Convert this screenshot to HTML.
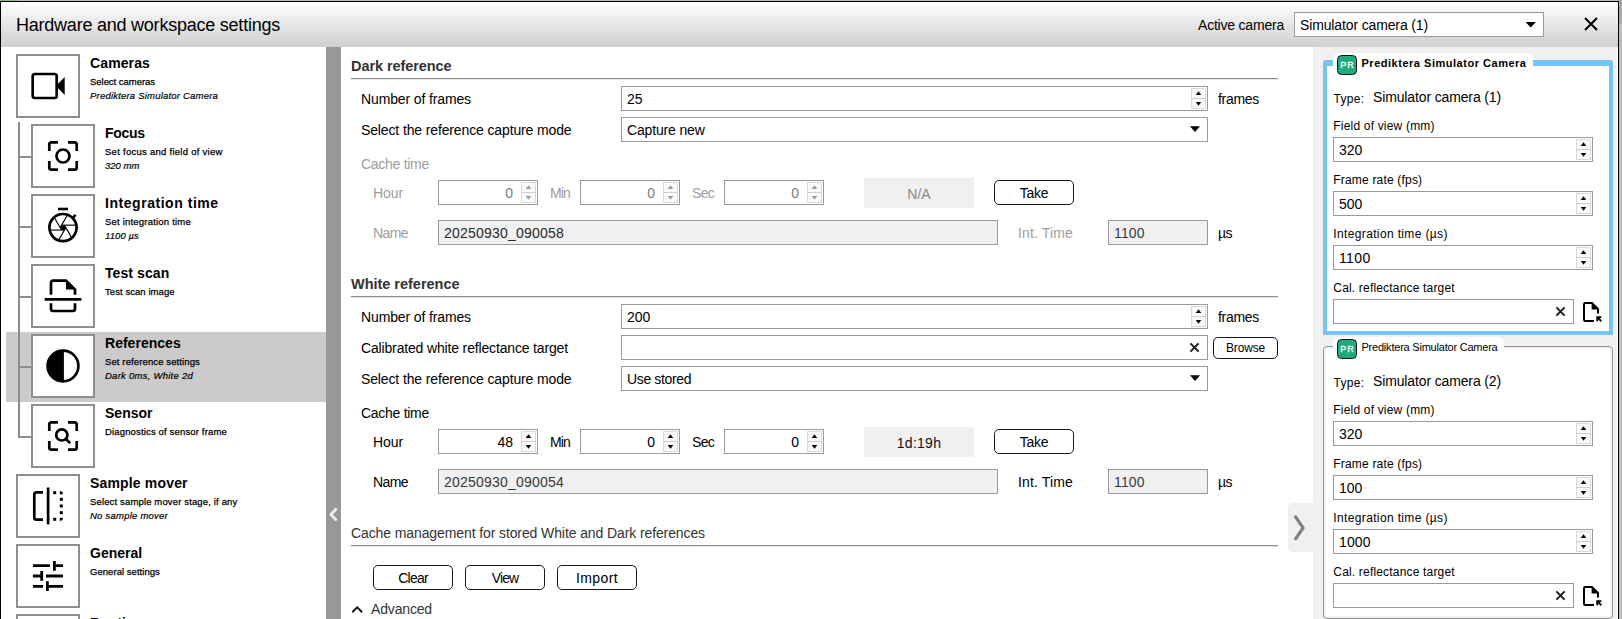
<!DOCTYPE html>
<html><head><meta charset="utf-8"><title>Hardware and workspace settings</title>
<style>
html,body{margin:0;padding:0}
body{width:1622px;height:619px;overflow:hidden;background:#fff;position:relative;font-family:"Liberation Sans",sans-serif}
.a{position:absolute;display:block}
.t{position:absolute;white-space:nowrap;display:block}
.bx{width:64px;height:64px;box-sizing:border-box;border:2px solid #8f8f8f;background:#fff}
.bx svg{display:block}
</style></head>
<body>
<div class="a" style="left:0px;top:0px;width:1622px;height:1px;background:#bdbdbd"></div>
<div class="a" style="left:0px;top:0px;width:18px;height:1px;background:#8fbc8f"></div>
<div class="a" style="left:0px;top:1px;width:1619px;height:1px;background:#000"></div>
<div class="a" style="left:0px;top:1px;width:1px;height:618px;background:#000"></div>
<div class="a" style="left:1618px;top:1px;width:1px;height:618px;background:#000"></div>
<div class="a" style="left:1619px;top:0px;width:3px;height:619px;background:#bcbcbc"></div>
<div class="a" style="left:1619px;top:0px;width:3px;height:24px;background:#a9a9a9"></div>
<div class="a" style="left:1px;top:2px;width:1617px;height:45px;background:linear-gradient(#ffffff,#f3f3f3 25%,#e2e2e2 60%,#cfcfcf 100%)"></div>
<span class="t" id="t1" style="left:16px;top:15px;font-size:18px;line-height:20px;color:#000;letter-spacing:-0.230px;">Hardware and workspace settings</span>
<span class="t" id="t2" style="left:1198px;top:17px;font-size:14px;line-height:16px;color:#000;letter-spacing:-0.208px;">Active camera</span>
<div class="a" style="left:1294px;top:12px;width:250px;height:25px;background:#fff;border:1px solid #9a9a9a;box-sizing:border-box"></div>
<span class="t" id="t3" style="left:1300px;top:17px;font-size:14px;line-height:16px;color:#000;letter-spacing:-0.135px;">Simulator camera (1)</span>
<svg class="a" style="left:1524px;top:20px" width="14" height="9"><path d="M1.5 2 L12 2 L6.75 7.6 Z" fill="#000"/></svg>
<svg class="a" style="left:1582px;top:15px" width="18" height="18"><path d="M3 3 L15 15 M15 3 L3 15" stroke="#000" stroke-width="2" fill="none"/></svg>
<div class="a" style="left:1px;top:47px;width:325px;height:572px;background:#fff"></div>
<div class="a" style="left:6px;top:332px;width:320px;height:70px;background:#cccaca"></div>
<div class="a" style="left:18px;top:122px;width:2px;height:316px;background:#8c8c8c"></div>
<div class="a" style="left:20px;top:156px;width:11px;height:2px;background:#8c8c8c"></div>
<div class="a" style="left:20px;top:226px;width:11px;height:2px;background:#8c8c8c"></div>
<div class="a" style="left:20px;top:296px;width:11px;height:2px;background:#8c8c8c"></div>
<div class="a" style="left:20px;top:366px;width:11px;height:2px;background:#8c8c8c"></div>
<div class="a" style="left:20px;top:436px;width:11px;height:2px;background:#8c8c8c"></div>
<div class="a bx" style="left:16px;top:54px"><svg width="60" height="60" viewBox="2 2 60 60"><rect x="16.7" y="20" width="24" height="24" rx="2.2" stroke="#000" stroke-width="2.7" fill="none"/><path d="M41.6 30.2 L48.7 23 L48.7 41 L41.6 33.8 Z" fill="#000"/></svg></div>
<span class="t" id="t4" style="left:90px;top:54.6px;font-size:14px;line-height:16px;color:#000;font-weight:bold;letter-spacing:0.121px;">Cameras</span>
<span class="t" id="t5" style="left:90px;top:76px;font-size:9.5px;line-height:11px;color:#000;letter-spacing:-0.035px;-webkit-text-stroke:0.25px #000;">Select cameras</span>
<span class="t" id="t6" style="left:90px;top:90px;font-size:9.5px;line-height:11px;color:#000;font-style:italic;letter-spacing:0.204px;-webkit-text-stroke:0.2px #000;">Prediktera Simulator Camera</span>
<div class="a bx" style="left:31px;top:124px"><svg width="60" height="60" viewBox="2 2 60 60"><path d="M18.3 27 V20.5 Q18.3 18.3 20.5 18.3 H27 M37 18.3 H43.5 Q45.7 18.3 45.7 20.5 V27 M45.7 37 V43.5 Q45.7 45.7 43.5 45.7 H37 M27 45.7 H20.5 Q18.3 45.7 18.3 43.5 V37" stroke="#000" stroke-width="2.7" fill="none"/><circle cx="32" cy="32" r="6.5" stroke="#000" stroke-width="2.7" fill="none"/></svg></div>
<span class="t" id="t7" style="left:105px;top:124.6px;font-size:14px;line-height:16px;color:#000;font-weight:bold;letter-spacing:-0.287px;">Focus</span>
<span class="t" id="t8" style="left:105px;top:146px;font-size:9.5px;line-height:11px;color:#000;letter-spacing:0.268px;-webkit-text-stroke:0.25px #000;">Set focus and field of view</span>
<span class="t" id="t9" style="left:105px;top:160px;font-size:9.5px;line-height:11px;color:#000;font-style:italic;letter-spacing:0.012px;-webkit-text-stroke:0.2px #000;">320 mm</span>
<div class="a bx" style="left:31px;top:194px"><svg width="60" height="60" viewBox="2 2 60 60"><path d="M27 15 H37" stroke="#000" stroke-width="2.6" fill="none"/><circle cx="32" cy="33.6" r="13.6" stroke="#000" stroke-width="2.7" fill="none"/><path d="M41.6 24 L44.6 20.8" stroke="#000" stroke-width="2.6" fill="none"/><path d="M30.59 31.15 L33.41 31.15 L34.83 33.60 L33.41 36.05 L30.59 36.05 L29.17 33.60 Z" fill="#000"/><path d="M30.59 31.15 L44.56 31.15" stroke="#000" stroke-width="1.15" fill="none"/><path d="M33.41 31.15 L40.40 43.26" stroke="#000" stroke-width="1.15" fill="none"/><path d="M34.83 33.60 L27.84 45.71" stroke="#000" stroke-width="1.15" fill="none"/><path d="M33.41 36.05 L19.44 36.05" stroke="#000" stroke-width="1.15" fill="none"/><path d="M30.59 36.05 L23.60 23.94" stroke="#000" stroke-width="1.15" fill="none"/><path d="M29.17 33.60 L36.16 21.49" stroke="#000" stroke-width="1.15" fill="none"/></svg></div>
<span class="t" id="t10" style="left:105px;top:194.6px;font-size:14px;line-height:16px;color:#000;font-weight:bold;letter-spacing:0.543px;">Integration time</span>
<span class="t" id="t11" style="left:105px;top:216px;font-size:9.5px;line-height:11px;color:#000;letter-spacing:0.202px;-webkit-text-stroke:0.25px #000;">Set integration time</span>
<span class="t" id="t12" style="left:105px;top:230px;font-size:9.5px;line-height:11px;color:#000;font-style:italic;letter-spacing:0.086px;-webkit-text-stroke:0.2px #000;">1100 µs</span>
<div class="a bx" style="left:31px;top:264px"><svg width="60" height="60" viewBox="2 2 60 60"><path d="M20 30.8 V18.8 Q20 16.6 22.2 16.6 H35 L44 25.6 V30.8" stroke="#000" stroke-width="2.7" fill="none"/><path d="M35 16.6 V25.6 H44 Z" fill="#000"/><path d="M13.7 35.3 H50.4" stroke="#000" stroke-width="2.7" fill="none"/><path d="M20 39.3 V44.8 Q20 47 22.2 47 H41.8 Q44 47 44 44.8 V39.3" stroke="#000" stroke-width="2.7" fill="none"/></svg></div>
<span class="t" id="t13" style="left:105px;top:264.6px;font-size:14px;line-height:16px;color:#000;font-weight:bold;letter-spacing:0.095px;">Test scan</span>
<span class="t" id="t14" style="left:105px;top:286px;font-size:9.5px;line-height:11px;color:#000;letter-spacing:0.063px;-webkit-text-stroke:0.25px #000;">Test scan image</span>
<div class="a bx" style="left:31px;top:334px"><svg width="60" height="60" viewBox="2 2 60 60"><circle cx="32" cy="32" r="15.4" stroke="#000" stroke-width="2.7" fill="none"/><path d="M32.9 16.6 A15.4 15.4 0 0 0 32.9 47.4 Z" fill="#000"/><path d="M32 16.6 A15.4 15.4 0 0 0 32 47.4 Z" fill="#000"/></svg></div>
<span class="t" id="t15" style="left:105px;top:334.6px;font-size:14px;line-height:16px;color:#000;font-weight:bold;letter-spacing:0.020px;">References</span>
<span class="t" id="t16" style="left:105px;top:356px;font-size:9.5px;line-height:11px;color:#000;letter-spacing:0.117px;-webkit-text-stroke:0.25px #000;">Set reference settings</span>
<span class="t" id="t17" style="left:105px;top:370px;font-size:9.5px;line-height:11px;color:#000;font-style:italic;letter-spacing:0.254px;-webkit-text-stroke:0.2px #000;">Dark 0ms, White 2d</span>
<div class="a bx" style="left:31px;top:404px"><svg width="60" height="60" viewBox="2 2 60 60"><path d="M18.3 27 V20.5 Q18.3 18.3 20.5 18.3 H27 M37 18.3 H43.5 Q45.7 18.3 45.7 20.5 V27 M45.7 37 V43.5 Q45.7 45.7 43.5 45.7 H37 M27 45.7 H20.5 Q18.3 45.7 18.3 43.5 V37" stroke="#000" stroke-width="2.7" fill="none"/><circle cx="30.8" cy="30.9" r="5.6" stroke="#000" stroke-width="2.7" fill="none"/><path d="M34.9 35 L39.2 39.3" stroke="#000" stroke-width="2.7" fill="none"/></svg></div>
<span class="t" id="t18" style="left:105px;top:404.6px;font-size:14px;line-height:16px;color:#000;font-weight:bold;letter-spacing:0.005px;">Sensor</span>
<span class="t" id="t19" style="left:105px;top:426px;font-size:9.5px;line-height:11px;color:#000;letter-spacing:0.154px;-webkit-text-stroke:0.25px #000;">Diagnostics of sensor frame</span>
<div class="a bx" style="left:16px;top:474px"><svg width="60" height="60" viewBox="2 2 60 60"><path d="M27 18.3 H20.5 Q18.3 18.3 18.3 20.5 V43.5 Q18.3 45.7 20.5 45.7 H27" stroke="#000" stroke-width="2.7" fill="none"/><path d="M32.1 13.5 V50.4" stroke="#000" stroke-width="2.7" fill="none"/><rect x="43.8" y="23.8" width="3" height="3" fill="#000"/><rect x="43.8" y="30.5" width="3" height="3" fill="#000"/><rect x="43.8" y="37.2" width="3" height="3" fill="#000"/><path d="M43.8 17.2 H44.6 Q46.8 17.2 46.8 19.4 V20.2 H43.8 Z M43.8 43.8 H46.8 V44.6 Q46.8 46.8 44.6 46.8 H43.8 Z" fill="#000"/><rect x="37.2" y="17.2" width="3" height="3" fill="#000"/><rect x="37.2" y="43.8" width="3" height="3" fill="#000"/></svg></div>
<span class="t" id="t20" style="left:90px;top:474.6px;font-size:14px;line-height:16px;color:#000;font-weight:bold;letter-spacing:0.165px;">Sample mover</span>
<span class="t" id="t21" style="left:90px;top:496px;font-size:9.5px;line-height:11px;color:#000;letter-spacing:0.146px;-webkit-text-stroke:0.25px #000;">Select sample mover stage, if any</span>
<span class="t" id="t22" style="left:90px;top:510px;font-size:9.5px;line-height:11px;color:#000;font-style:italic;letter-spacing:0.236px;-webkit-text-stroke:0.2px #000;">No sample mover</span>
<div class="a bx" style="left:16px;top:544px"><svg width="60" height="60" viewBox="2 2 60 60"><path d="M16.9 21.7 H33.9 M38.4 16.9 V26.7 M38.4 21.7 H47 M16.9 32 H25.7 M25.7 27.1 V36.7 M30 32 H47 M16.9 42.4 H27.1 M31.4 37.2 V47 M31.4 42.4 H47" stroke="#000" stroke-width="2.8" fill="none"/></svg></div>
<span class="t" id="t23" style="left:90px;top:544.6px;font-size:14px;line-height:16px;color:#000;font-weight:bold;letter-spacing:0.008px;">General</span>
<span class="t" id="t24" style="left:90px;top:566px;font-size:9.5px;line-height:11px;color:#000;letter-spacing:0.045px;-webkit-text-stroke:0.25px #000;">General settings</span>
<div class="a bx" style="left:16px;top:614px"><svg width="60" height="60" viewBox="2 2 60 60"></svg></div>
<span class="t" id="t25" style="left:90px;top:614.6px;font-size:14px;line-height:16px;color:#000;font-weight:bold;">Runtime</span>
<div class="a" style="left:326px;top:47px;width:15px;height:572px;background:#989898"></div>
<svg class="a" style="left:326px;top:504px" width="15" height="22"><path d="M9.7 5.4 L4.8 10.4 L9.7 15.4" stroke="#ededed" stroke-width="2.9" fill="none" stroke-linecap="round" stroke-linejoin="round"/></svg>
<span class="t" id="t26" style="left:351px;top:58px;font-size:14.5px;line-height:16px;color:#333;font-weight:bold;letter-spacing:-0.070px;">Dark reference</span>
<div class="a" style="left:351px;top:78px;width:927px;height:1px;background:#8e8e8e"></div>
<div class="a" style="left:351px;top:79px;width:927px;height:1px;background:#e4e4e4"></div>
<span class="t" id="t27" style="left:361px;top:90.5px;font-size:14px;line-height:16px;color:#000;letter-spacing:-0.128px;">Number of frames</span>
<div class="a" style="left:621px;top:86px;width:587px;height:25px;background:#fff;border:1px solid #9a9a9a;box-sizing:border-box"></div>
<div class="a" style="left:1191px;top:88px;width:15px;height:21px;background:#fafafa;border:1px solid #d9d9d9;box-sizing:border-box"></div>
<div class="a" style="left:1191px;top:98px;width:15px;height:1px;background:#cfcfcf"></div>
<svg class="a" style="left:1191px;top:86px" width="15" height="25"><path d="M4.7 8.9 L10.3 8.9 L7.5 5.2 Z M4.7 16 L10.3 16 L7.5 19.8 Z" fill="#000"/></svg>
<span class="t" id="t28" style="left:627px;top:90.5px;font-size:14px;line-height:16px;color:#000;letter-spacing:-0.139px;">25</span>
<span class="t" id="t29" style="left:1218px;top:90.5px;font-size:14px;line-height:16px;color:#000;letter-spacing:-0.299px;">frames</span>
<span class="t" id="t30" style="left:361px;top:121.5px;font-size:14px;line-height:16px;color:#000;letter-spacing:-0.130px;">Select the reference capture mode</span>
<div class="a" style="left:621px;top:117px;width:587px;height:25px;background:#fff;border:1px solid #9a9a9a;box-sizing:border-box"></div>
<span class="t" id="t31" style="left:627px;top:121.5px;font-size:14px;line-height:16px;color:#000;letter-spacing:-0.154px;">Capture new</span>
<svg class="a" style="left:1188px;top:125px" width="14" height="9"><path d="M2 1.3 L12 1.3 L7 7 Z" fill="#000"/></svg>
<span class="t" id="t32" style="left:361px;top:155.5px;font-size:14px;line-height:16px;color:#9d9d9d;letter-spacing:-0.281px;">Cache time</span>
<span class="t" id="t33" style="left:373px;top:184.5px;font-size:14px;line-height:16px;color:#9d9d9d;letter-spacing:-0.090px;">Hour</span>
<span class="t" id="t34" style="left:550px;top:184.5px;font-size:14px;line-height:16px;color:#9d9d9d;letter-spacing:-0.854px;">Min</span>
<span class="t" id="t35" style="left:692px;top:184.5px;font-size:14px;line-height:16px;color:#9d9d9d;letter-spacing:-0.708px;">Sec</span>
<span class="t" id="t36" style="left:373px;top:224.5px;font-size:14px;line-height:16px;color:#9d9d9d;letter-spacing:-0.590px;">Name</span>
<span class="t" id="t37" style="left:1018px;top:224.5px;font-size:14px;line-height:16px;color:#9d9d9d;letter-spacing:0.146px;">Int. Time</span>
<div class="a" style="left:438px;top:180px;width:100px;height:25px;background:#fff;border:1px solid #9a9a9a;box-sizing:border-box"></div>
<div class="a" style="left:521px;top:182px;width:15px;height:21px;background:#fafafa;border:1px solid #d9d9d9;box-sizing:border-box"></div>
<div class="a" style="left:521px;top:192px;width:15px;height:1px;background:#cfcfcf"></div>
<svg class="a" style="left:521px;top:180px" width="15" height="25"><path d="M4.7 8.9 L10.3 8.9 L7.5 5.2 Z M4.7 16 L10.3 16 L7.5 19.8 Z" fill="#9a9a9a"/></svg>
<span class="t" id="t38" style="left:438px;top:184.5px;font-size:14px;line-height:16px;color:#7d7d7d;width:75px;text-align:right;">0</span>
<div class="a" style="left:580px;top:180px;width:100px;height:25px;background:#fff;border:1px solid #9a9a9a;box-sizing:border-box"></div>
<div class="a" style="left:663px;top:182px;width:15px;height:21px;background:#fafafa;border:1px solid #d9d9d9;box-sizing:border-box"></div>
<div class="a" style="left:663px;top:192px;width:15px;height:1px;background:#cfcfcf"></div>
<svg class="a" style="left:663px;top:180px" width="15" height="25"><path d="M4.7 8.9 L10.3 8.9 L7.5 5.2 Z M4.7 16 L10.3 16 L7.5 19.8 Z" fill="#9a9a9a"/></svg>
<span class="t" id="t39" style="left:580px;top:184.5px;font-size:14px;line-height:16px;color:#7d7d7d;width:75px;text-align:right;">0</span>
<div class="a" style="left:724px;top:180px;width:100px;height:25px;background:#fff;border:1px solid #9a9a9a;box-sizing:border-box"></div>
<div class="a" style="left:807px;top:182px;width:15px;height:21px;background:#fafafa;border:1px solid #d9d9d9;box-sizing:border-box"></div>
<div class="a" style="left:807px;top:192px;width:15px;height:1px;background:#cfcfcf"></div>
<svg class="a" style="left:807px;top:180px" width="15" height="25"><path d="M4.7 8.9 L10.3 8.9 L7.5 5.2 Z M4.7 16 L10.3 16 L7.5 19.8 Z" fill="#9a9a9a"/></svg>
<span class="t" id="t40" style="left:724px;top:184.5px;font-size:14px;line-height:16px;color:#7d7d7d;width:75px;text-align:right;">0</span>
<div class="a" style="left:864px;top:178px;width:110px;height:30px;background:#f0f0f0"></div>
<span class="t" id="t41" style="left:864px;top:185.5px;font-size:14px;line-height:16px;color:#8a8a8a;width:110px;text-align:center;">N/A</span>
<div class="a" style="left:994px;top:180px;width:80px;height:25px;background:#fff;border:1px solid #1a1a1a;border-radius:5px;box-sizing:border-box"></div>
<span class="t" id="t42" style="left:994px;top:184.5px;font-size:14px;line-height:16px;color:#000;width:80px;text-align:center;letter-spacing:-0.220px;">Take</span>
<div class="a" style="left:438px;top:220px;width:560px;height:25px;background:#f0f0f0;border:1px solid #9a9a9a;box-sizing:border-box"></div>
<span class="t" id="t43" style="left:444px;top:224.5px;font-size:14px;line-height:16px;color:#2a2a2a;letter-spacing:0.214px;">20250930_090058</span>
<div class="a" style="left:1108px;top:220px;width:100px;height:25px;background:#f0f0f0;border:1px solid #9a9a9a;box-sizing:border-box"></div>
<span class="t" id="t44" style="left:1114px;top:224.5px;font-size:14px;line-height:16px;color:#3c3c3c;letter-spacing:0.148px;">1100</span>
<span class="t" id="t45" style="left:1218px;top:224.5px;font-size:14px;line-height:16px;color:#000;letter-spacing:-0.539px;">µs</span>
<span class="t" id="t46" style="left:351px;top:276px;font-size:14.5px;line-height:16px;color:#333;font-weight:bold;letter-spacing:-0.020px;">White reference</span>
<div class="a" style="left:351px;top:296px;width:927px;height:1px;background:#8e8e8e"></div>
<div class="a" style="left:351px;top:297px;width:927px;height:1px;background:#e4e4e4"></div>
<span class="t" id="t47" style="left:361px;top:308.5px;font-size:14px;line-height:16px;color:#000;letter-spacing:-0.128px;">Number of frames</span>
<div class="a" style="left:621px;top:304px;width:587px;height:25px;background:#fff;border:1px solid #9a9a9a;box-sizing:border-box"></div>
<div class="a" style="left:1191px;top:306px;width:15px;height:21px;background:#fafafa;border:1px solid #d9d9d9;box-sizing:border-box"></div>
<div class="a" style="left:1191px;top:316px;width:15px;height:1px;background:#cfcfcf"></div>
<svg class="a" style="left:1191px;top:304px" width="15" height="25"><path d="M4.7 8.9 L10.3 8.9 L7.5 5.2 Z M4.7 16 L10.3 16 L7.5 19.8 Z" fill="#000"/></svg>
<span class="t" id="t48" style="left:627px;top:308.5px;font-size:14px;line-height:16px;color:#000;">200</span>
<span class="t" id="t49" style="left:1218px;top:308.5px;font-size:14px;line-height:16px;color:#000;letter-spacing:-0.299px;">frames</span>
<span class="t" id="t50" style="left:361px;top:339.5px;font-size:14px;line-height:16px;color:#000;letter-spacing:-0.156px;">Calibrated white reflectance target</span>
<div class="a" style="left:621px;top:335px;width:587px;height:25px;background:#fff;border:1px solid #9a9a9a;box-sizing:border-box"></div>
<svg class="a" style="left:1188px;top:341px" width="13" height="13"><path d="M2.4 2.4 L10.6 10.6 M10.6 2.4 L2.4 10.6" stroke="#1c1c1c" stroke-width="2" fill="none"/></svg>
<div class="a" style="left:1213px;top:337px;width:65px;height:22px;background:#fff;border:1px solid #1a1a1a;border-radius:5px;box-sizing:border-box"></div>
<span class="t" id="t51" style="left:1213px;top:341.3px;font-size:12px;line-height:14px;color:#000;width:65px;text-align:center;letter-spacing:-0.169px;">Browse</span>
<span class="t" id="t52" style="left:361px;top:370.5px;font-size:14px;line-height:16px;color:#000;letter-spacing:-0.130px;">Select the reference capture mode</span>
<div class="a" style="left:621px;top:366px;width:587px;height:25px;background:#fff;border:1px solid #9a9a9a;box-sizing:border-box"></div>
<span class="t" id="t53" style="left:627px;top:370.5px;font-size:14px;line-height:16px;color:#000;letter-spacing:-0.360px;">Use stored</span>
<svg class="a" style="left:1188px;top:374px" width="14" height="9"><path d="M2 1.3 L12 1.3 L7 7 Z" fill="#000"/></svg>
<span class="t" id="t54" style="left:361px;top:404.5px;font-size:14px;line-height:16px;color:#000;letter-spacing:-0.281px;">Cache time</span>
<span class="t" id="t55" style="left:373px;top:433.5px;font-size:14px;line-height:16px;color:#000;letter-spacing:-0.090px;">Hour</span>
<span class="t" id="t56" style="left:550px;top:433.5px;font-size:14px;line-height:16px;color:#000;letter-spacing:-0.854px;">Min</span>
<span class="t" id="t57" style="left:692px;top:433.5px;font-size:14px;line-height:16px;color:#000;letter-spacing:-0.708px;">Sec</span>
<span class="t" id="t58" style="left:373px;top:473.5px;font-size:14px;line-height:16px;color:#000;letter-spacing:-0.590px;">Name</span>
<span class="t" id="t59" style="left:1018px;top:473.5px;font-size:14px;line-height:16px;color:#000;letter-spacing:0.146px;">Int. Time</span>
<div class="a" style="left:438px;top:429px;width:100px;height:25px;background:#fff;border:1px solid #9a9a9a;box-sizing:border-box"></div>
<div class="a" style="left:521px;top:431px;width:15px;height:21px;background:#fafafa;border:1px solid #d9d9d9;box-sizing:border-box"></div>
<div class="a" style="left:521px;top:441px;width:15px;height:1px;background:#cfcfcf"></div>
<svg class="a" style="left:521px;top:429px" width="15" height="25"><path d="M4.7 8.9 L10.3 8.9 L7.5 5.2 Z M4.7 16 L10.3 16 L7.5 19.8 Z" fill="#000"/></svg>
<span class="t" id="t60" style="left:438px;top:433.5px;font-size:14px;line-height:16px;color:#000;width:75px;text-align:right;letter-spacing:-0.039px;">48</span>
<div class="a" style="left:580px;top:429px;width:100px;height:25px;background:#fff;border:1px solid #9a9a9a;box-sizing:border-box"></div>
<div class="a" style="left:663px;top:431px;width:15px;height:21px;background:#fafafa;border:1px solid #d9d9d9;box-sizing:border-box"></div>
<div class="a" style="left:663px;top:441px;width:15px;height:1px;background:#cfcfcf"></div>
<svg class="a" style="left:663px;top:429px" width="15" height="25"><path d="M4.7 8.9 L10.3 8.9 L7.5 5.2 Z M4.7 16 L10.3 16 L7.5 19.8 Z" fill="#000"/></svg>
<span class="t" id="t61" style="left:580px;top:433.5px;font-size:14px;line-height:16px;color:#000;width:75px;text-align:right;">0</span>
<div class="a" style="left:724px;top:429px;width:100px;height:25px;background:#fff;border:1px solid #9a9a9a;box-sizing:border-box"></div>
<div class="a" style="left:807px;top:431px;width:15px;height:21px;background:#fafafa;border:1px solid #d9d9d9;box-sizing:border-box"></div>
<div class="a" style="left:807px;top:441px;width:15px;height:1px;background:#cfcfcf"></div>
<svg class="a" style="left:807px;top:429px" width="15" height="25"><path d="M4.7 8.9 L10.3 8.9 L7.5 5.2 Z M4.7 16 L10.3 16 L7.5 19.8 Z" fill="#000"/></svg>
<span class="t" id="t62" style="left:724px;top:433.5px;font-size:14px;line-height:16px;color:#000;width:75px;text-align:right;">0</span>
<div class="a" style="left:864px;top:427px;width:110px;height:30px;background:#f0f0f0"></div>
<span class="t" id="t63" style="left:864px;top:434.8px;font-size:14px;line-height:16px;color:#111;width:110px;text-align:center;letter-spacing:0.279px;">1d:19h</span>
<div class="a" style="left:994px;top:429px;width:80px;height:25px;background:#fff;border:1px solid #1a1a1a;border-radius:5px;box-sizing:border-box"></div>
<span class="t" id="t64" style="left:994px;top:433.5px;font-size:14px;line-height:16px;color:#000;width:80px;text-align:center;letter-spacing:-0.220px;">Take</span>
<div class="a" style="left:438px;top:469px;width:560px;height:25px;background:#f0f0f0;border:1px solid #9a9a9a;box-sizing:border-box"></div>
<span class="t" id="t65" style="left:444px;top:473.5px;font-size:14px;line-height:16px;color:#383838;letter-spacing:0.214px;">20250930_090054</span>
<div class="a" style="left:1108px;top:469px;width:100px;height:25px;background:#f0f0f0;border:1px solid #9a9a9a;box-sizing:border-box"></div>
<span class="t" id="t66" style="left:1114px;top:473.5px;font-size:14px;line-height:16px;color:#3c3c3c;letter-spacing:0.148px;">1100</span>
<span class="t" id="t67" style="left:1218px;top:473.5px;font-size:14px;line-height:16px;color:#000;letter-spacing:-0.539px;">µs</span>
<span class="t" id="t68" style="left:351px;top:524.5px;font-size:14px;line-height:16px;color:#333;letter-spacing:-0.104px;">Cache management for stored White and Dark references</span>
<div class="a" style="left:351px;top:545px;width:927px;height:1px;background:#8e8e8e"></div>
<div class="a" style="left:351px;top:546px;width:927px;height:1px;background:#e4e4e4"></div>
<div class="a" style="left:373px;top:565px;width:80px;height:25px;background:#fff;border:1px solid #1a1a1a;border-radius:5px;box-sizing:border-box"></div>
<span class="t" id="t69" style="left:373px;top:569.5px;font-size:14px;line-height:16px;color:#000;width:80px;text-align:center;letter-spacing:-0.774px;">Clear</span>
<div class="a" style="left:465px;top:565px;width:80px;height:25px;background:#fff;border:1px solid #1a1a1a;border-radius:5px;box-sizing:border-box"></div>
<span class="t" id="t70" style="left:465px;top:569.5px;font-size:14px;line-height:16px;color:#000;width:80px;text-align:center;letter-spacing:-0.923px;">View</span>
<div class="a" style="left:557px;top:565px;width:80px;height:25px;background:#fff;border:1px solid #1a1a1a;border-radius:5px;box-sizing:border-box"></div>
<span class="t" id="t71" style="left:557px;top:569.5px;font-size:14px;line-height:16px;color:#000;width:80px;text-align:center;letter-spacing:0.369px;">Import</span>
<svg class="a" style="left:350px;top:604px" width="15" height="11"><path d="M2.3 8.2 L7.2 3.4 L12.1 8.2" stroke="#111" stroke-width="1.9" fill="none"/></svg>
<span class="t" id="t72" style="left:371px;top:600.5px;font-size:14px;line-height:16px;color:#333;letter-spacing:-0.160px;">Advanced</span>
<div class="a" style="left:1313px;top:47px;width:304px;height:572px;background:#f0f0f0"></div>
<div class="a" style="left:1617px;top:47px;width:1px;height:572px;background:#fff"></div>
<div class="a" style="left:1288px;top:503px;width:26px;height:49px;background:#f0f0f0;border-radius:5px 0 0 5px"></div>
<svg class="a" style="left:1288px;top:510px" width="24" height="36"><path d="M7.6 6.9 L15.1 17.85 L7.6 28.8" stroke="#808080" stroke-width="3.2" fill="none" stroke-linecap="round" stroke-linejoin="round"/></svg>
<div class="a" style="left:1323px;top:60px;width:290px;height:275px;background:#fff;border:4px solid #75c5f2;border-top-width:6px;box-sizing:border-box;border-radius:3px 3px 0 0"></div>
<div class="a" style="left:1333px;top:53px;width:200px;height:24px;background:#fff;border-radius:6px 6px 0 0"></div>
<div class="a" style="left:1337px;top:55px;width:20px;height:20px;background:#1fab7b;border:1px solid #141414;border-radius:4.5px;box-sizing:border-box"></div>
<span class="t" id="t73" style="left:1337px;top:60.4px;font-size:9px;line-height:10px;color:#fff;width:20px;text-align:center;letter-spacing:0.9px;text-indent:0.9px;-webkit-text-stroke:0.3px #fff;">PR</span>
<span class="t" id="t74" style="left:1361.5px;top:57.3px;font-size:11px;line-height:12px;color:#000;font-weight:bold;letter-spacing:0.518px;">Prediktera Simulator Camera</span>
<span class="t" id="t75" style="left:1333.5px;top:91.6px;font-size:12px;line-height:14px;color:#000;letter-spacing:0.328px;">Type:</span>
<span class="t" id="t76" style="left:1373px;top:89.3px;font-size:14px;line-height:16px;color:#000;letter-spacing:-0.135px;">Simulator camera (1)</span>
<span class="t" id="t77" style="left:1333.3px;top:118.8px;font-size:12px;line-height:14px;color:#000;letter-spacing:0.188px;">Field of view (mm)</span>
<div class="a" style="left:1333px;top:137px;width:260px;height:25px;background:#fff;border:1px solid #9a9a9a;box-sizing:border-box"></div>
<div class="a" style="left:1576px;top:139px;width:15px;height:21px;background:#fafafa;border:1px solid #d9d9d9;box-sizing:border-box"></div>
<div class="a" style="left:1576px;top:149px;width:15px;height:1px;background:#cfcfcf"></div>
<svg class="a" style="left:1576px;top:137px" width="15" height="25"><path d="M4.7 8.9 L10.3 8.9 L7.5 5.2 Z M4.7 16 L10.3 16 L7.5 19.8 Z" fill="#000"/></svg>
<span class="t" id="t78" style="left:1339px;top:141.5px;font-size:14px;line-height:16px;color:#000;">320</span>
<span class="t" id="t79" style="left:1333.3px;top:172.8px;font-size:12px;line-height:14px;color:#000;letter-spacing:0.187px;">Frame rate (fps)</span>
<div class="a" style="left:1333px;top:191px;width:260px;height:25px;background:#fff;border:1px solid #9a9a9a;box-sizing:border-box"></div>
<div class="a" style="left:1576px;top:193px;width:15px;height:21px;background:#fafafa;border:1px solid #d9d9d9;box-sizing:border-box"></div>
<div class="a" style="left:1576px;top:203px;width:15px;height:1px;background:#cfcfcf"></div>
<svg class="a" style="left:1576px;top:191px" width="15" height="25"><path d="M4.7 8.9 L10.3 8.9 L7.5 5.2 Z M4.7 16 L10.3 16 L7.5 19.8 Z" fill="#000"/></svg>
<span class="t" id="t80" style="left:1339px;top:195.5px;font-size:14px;line-height:16px;color:#000;">500</span>
<span class="t" id="t81" style="left:1333.3px;top:226.8px;font-size:12px;line-height:14px;color:#000;letter-spacing:0.359px;">Integration time (µs)</span>
<div class="a" style="left:1333px;top:245px;width:260px;height:25px;background:#fff;border:1px solid #9a9a9a;box-sizing:border-box"></div>
<div class="a" style="left:1576px;top:247px;width:15px;height:21px;background:#fafafa;border:1px solid #d9d9d9;box-sizing:border-box"></div>
<div class="a" style="left:1576px;top:257px;width:15px;height:1px;background:#cfcfcf"></div>
<svg class="a" style="left:1576px;top:245px" width="15" height="25"><path d="M4.7 8.9 L10.3 8.9 L7.5 5.2 Z M4.7 16 L10.3 16 L7.5 19.8 Z" fill="#000"/></svg>
<span class="t" id="t82" style="left:1339px;top:249.5px;font-size:14px;line-height:16px;color:#000;letter-spacing:0.373px;">1100</span>
<span class="t" id="t83" style="left:1333.3px;top:280.8px;font-size:12px;line-height:14px;color:#000;letter-spacing:0.178px;">Cal. reflectance target</span>
<div class="a" style="left:1333px;top:299px;width:241px;height:25px;background:#fff;border:1px solid #9a9a9a;box-sizing:border-box"></div>
<svg class="a" style="left:1554px;top:305px" width="13" height="13"><path d="M2.4 2.4 L10.6 10.6 M10.6 2.4 L2.4 10.6" stroke="#1c1c1c" stroke-width="2" fill="none"/></svg>
<svg class="a" style="left:1581px;top:301px" width="22" height="22"><path d="M12.9 20 H4.2 Q3 20 3 18.8 V3.2 Q3 2 4.2 2 H11 L17 8 V12.6" stroke="#000" stroke-width="2" fill="none"/><path d="M10.6 2 V8.4 H17 Z" fill="#000"/><path d="M15.3 15.2 H20.3 V17 H18.4 L21 19.6 L19.7 20.9 L17.1 18.3 V20.2 H15.3 Z" fill="#000"/></svg>
<div class="a" style="left:1323px;top:346px;width:290px;height:273px;background:#f2f2f2;border:1px solid #929292;box-sizing:border-box;border-radius:4px"></div>
<div class="a" style="left:1326px;top:349px;width:284px;height:267px;background:#fff;border-radius:2px"></div>
<div class="a" style="left:1333px;top:337px;width:171px;height:24px;background:#fff;border-radius:6px 6px 0 0"></div>
<div class="a" style="left:1337px;top:339px;width:20px;height:20px;background:#1fab7b;border:1px solid #141414;border-radius:4.5px;box-sizing:border-box"></div>
<span class="t" id="t84" style="left:1337px;top:344.4px;font-size:9px;line-height:10px;color:#fff;width:20px;text-align:center;letter-spacing:0.9px;text-indent:0.9px;-webkit-text-stroke:0.3px #fff;">PR</span>
<span class="t" id="t85" style="left:1361.5px;top:341.3px;font-size:11px;line-height:12px;color:#000;letter-spacing:-0.216px;">Prediktera Simulator Camera</span>
<span class="t" id="t86" style="left:1333.5px;top:375.6px;font-size:12px;line-height:14px;color:#000;letter-spacing:0.328px;">Type:</span>
<span class="t" id="t87" style="left:1373px;top:373.3px;font-size:14px;line-height:16px;color:#000;letter-spacing:-0.135px;">Simulator camera (2)</span>
<span class="t" id="t88" style="left:1333.3px;top:402.8px;font-size:12px;line-height:14px;color:#000;letter-spacing:0.188px;">Field of view (mm)</span>
<div class="a" style="left:1333px;top:421px;width:260px;height:25px;background:#fff;border:1px solid #9a9a9a;box-sizing:border-box"></div>
<div class="a" style="left:1576px;top:423px;width:15px;height:21px;background:#fafafa;border:1px solid #d9d9d9;box-sizing:border-box"></div>
<div class="a" style="left:1576px;top:433px;width:15px;height:1px;background:#cfcfcf"></div>
<svg class="a" style="left:1576px;top:421px" width="15" height="25"><path d="M4.7 8.9 L10.3 8.9 L7.5 5.2 Z M4.7 16 L10.3 16 L7.5 19.8 Z" fill="#000"/></svg>
<span class="t" id="t89" style="left:1339px;top:425.5px;font-size:14px;line-height:16px;color:#000;">320</span>
<span class="t" id="t90" style="left:1333.3px;top:456.8px;font-size:12px;line-height:14px;color:#000;letter-spacing:0.187px;">Frame rate (fps)</span>
<div class="a" style="left:1333px;top:475px;width:260px;height:25px;background:#fff;border:1px solid #9a9a9a;box-sizing:border-box"></div>
<div class="a" style="left:1576px;top:477px;width:15px;height:21px;background:#fafafa;border:1px solid #d9d9d9;box-sizing:border-box"></div>
<div class="a" style="left:1576px;top:487px;width:15px;height:1px;background:#cfcfcf"></div>
<svg class="a" style="left:1576px;top:475px" width="15" height="25"><path d="M4.7 8.9 L10.3 8.9 L7.5 5.2 Z M4.7 16 L10.3 16 L7.5 19.8 Z" fill="#000"/></svg>
<span class="t" id="t91" style="left:1339px;top:479.5px;font-size:14px;line-height:16px;color:#000;">100</span>
<span class="t" id="t92" style="left:1333.3px;top:510.8px;font-size:12px;line-height:14px;color:#000;letter-spacing:0.359px;">Integration time (µs)</span>
<div class="a" style="left:1333px;top:529px;width:260px;height:25px;background:#fff;border:1px solid #9a9a9a;box-sizing:border-box"></div>
<div class="a" style="left:1576px;top:531px;width:15px;height:21px;background:#fafafa;border:1px solid #d9d9d9;box-sizing:border-box"></div>
<div class="a" style="left:1576px;top:541px;width:15px;height:1px;background:#cfcfcf"></div>
<svg class="a" style="left:1576px;top:529px" width="15" height="25"><path d="M4.7 8.9 L10.3 8.9 L7.5 5.2 Z M4.7 16 L10.3 16 L7.5 19.8 Z" fill="#000"/></svg>
<span class="t" id="t93" style="left:1339px;top:533.5px;font-size:14px;line-height:16px;color:#000;letter-spacing:0.136px;">1000</span>
<span class="t" id="t94" style="left:1333.3px;top:564.8px;font-size:12px;line-height:14px;color:#000;letter-spacing:0.178px;">Cal. reflectance target</span>
<div class="a" style="left:1333px;top:583px;width:241px;height:25px;background:#fff;border:1px solid #9a9a9a;box-sizing:border-box"></div>
<svg class="a" style="left:1554px;top:589px" width="13" height="13"><path d="M2.4 2.4 L10.6 10.6 M10.6 2.4 L2.4 10.6" stroke="#1c1c1c" stroke-width="2" fill="none"/></svg>
<svg class="a" style="left:1581px;top:585px" width="22" height="22"><path d="M12.9 20 H4.2 Q3 20 3 18.8 V3.2 Q3 2 4.2 2 H11 L17 8 V12.6" stroke="#000" stroke-width="2" fill="none"/><path d="M10.6 2 V8.4 H17 Z" fill="#000"/><path d="M15.3 15.2 H20.3 V17 H18.4 L21 19.6 L19.7 20.9 L17.1 18.3 V20.2 H15.3 Z" fill="#000"/></svg>
</body></html>
